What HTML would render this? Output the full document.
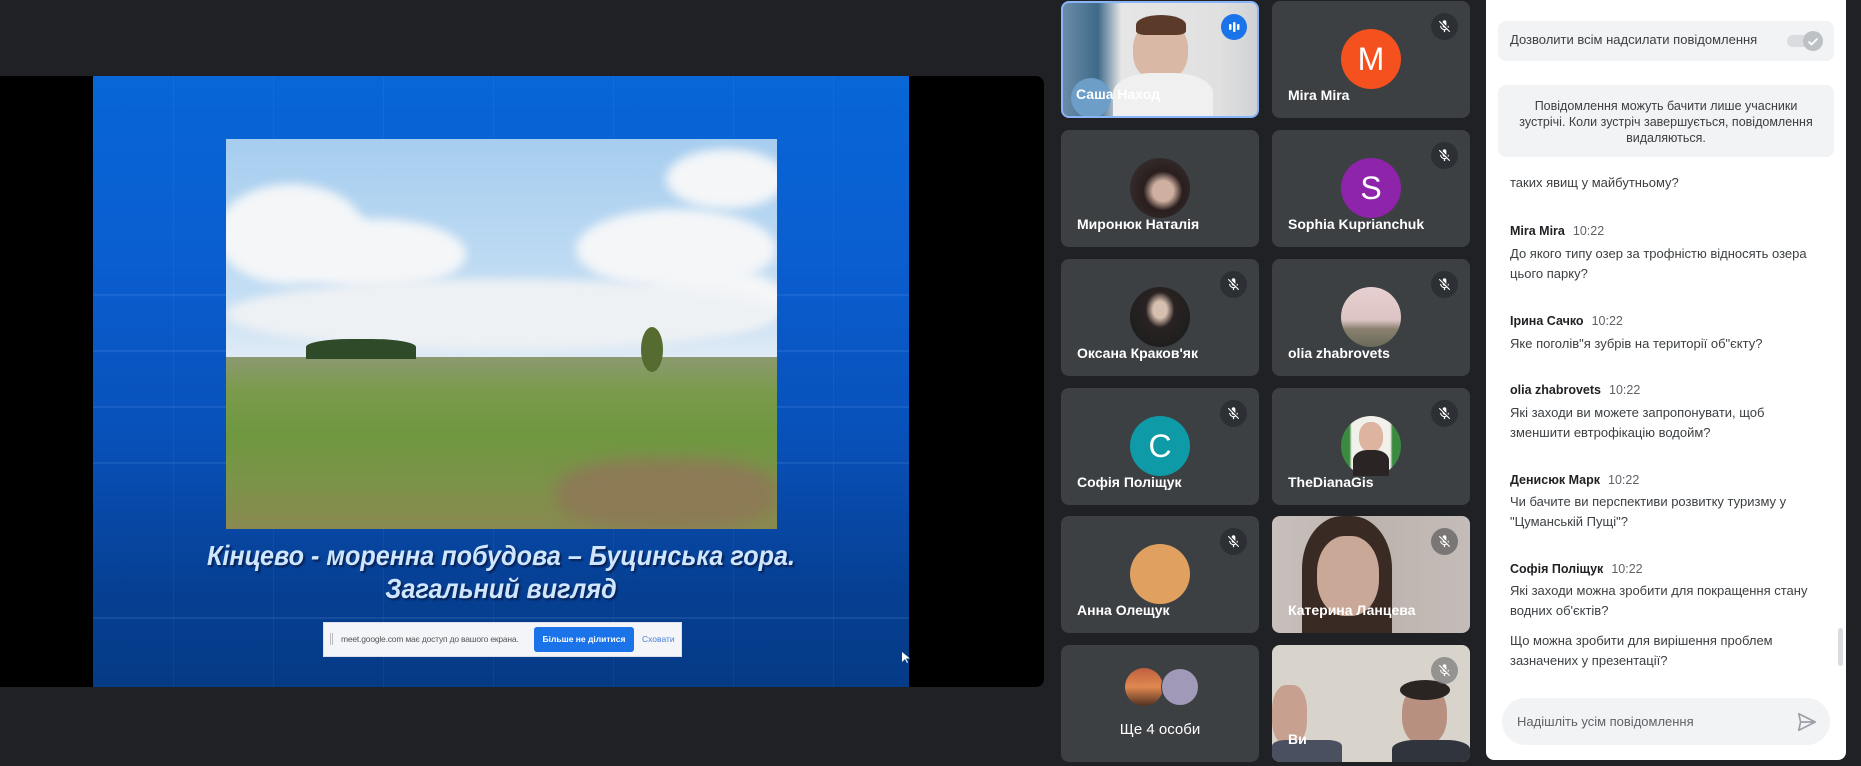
<!DOCTYPE html>
<html><head><meta charset="utf-8"><style>
*{margin:0;padding:0;box-sizing:border-box}
body{width:1861px;height:766px;background:#202124;position:relative;overflow:hidden;font-family:"Liberation Sans",Arial,sans-serif}
.abs{position:absolute}
.stage{left:0;top:76px;width:1044px;height:611px;background:#000;border-radius:0 8px 8px 0}
.slide{left:93px;top:76px;width:816px;height:611px;background:linear-gradient(#0866d6 0%,#0a5ed0 30%,#0850b8 60%,#063f92 85%,#053a85 100%);overflow:hidden}
.hl{position:absolute;left:0;width:100%;height:2px;background:rgba(120,170,255,.14)}
.vl{position:absolute;top:0;height:100%;width:1px;background:rgba(140,180,255,.08)}
.photo{left:226px;top:139px;width:551px;height:390px;overflow:hidden;background:linear-gradient(#a6cdef 0%,#c4def4 40%,#e6eef6 60%,#dfe8ee 66%)}
.cl{position:absolute;background:#f4f6f8;border-radius:50%;filter:blur(5px)}
.ground{position:absolute;left:0;top:218px;width:100%;height:172px;background:linear-gradient(#8c9a70 0%,#7a9a4c 20%,#6f9840 45%,#7a9448 70%,#8a8a50 100%)}
.title{left:93px;width:816px;text-align:center;color:#cfe6ff;font-style:italic;font-weight:bold;font-size:28px;text-shadow:2px 2px 2px #0a2050;transform:scaleX(.9)}
.bar{left:323px;top:622px;width:359px;height:35px;background:#f3f5f8;border:1px solid #dde}
.tile{position:absolute;width:198px;height:117px;background:#3c4043;border-radius:8px;overflow:hidden}
.nm{position:absolute;left:16px;bottom:15px;color:#fff;font-size:14px;font-weight:bold;white-space:nowrap}
.av{position:absolute;left:69px;top:28px;width:60px;height:60px;border-radius:50%;color:#fff;font-size:32px;text-align:center;line-height:60px}
.mute{position:absolute;right:12px;top:12px;width:27px;height:27px;border-radius:50%;background:#2c2f33}
.mute svg{position:absolute;left:6px;top:6px}
.chat{left:1486px;top:0;width:360px;height:760px;background:#fff;border-radius:0 0 8px 8px}
.msg{position:absolute;left:1510px;font-size:13px;color:#3c4043;line-height:20px}
.nme{position:absolute;left:1510px;font-size:12.5px;color:#202124;font-weight:bold}
.nme span{font-weight:normal;color:#5f6368;margin-left:8px}
</style></head><body>
<div class="abs stage"></div>
<div class="abs slide">
 <div class="hl" style="top:218px"></div><div class="hl" style="top:274px"></div><div class="hl" style="top:330px"></div><div class="hl" style="top:386px"></div><div class="hl" style="top:541px"></div>
 <div class="vl" style="left:80px"></div><div class="vl" style="left:180px"></div><div class="vl" style="left:290px"></div><div class="vl" style="left:400px"></div><div class="vl" style="left:520px"></div><div class="vl" style="left:640px"></div><div class="vl" style="left:740px"></div>
</div>
<div class="abs photo">
 <div class="cl" style="left:-10px;top:45px;width:150px;height:100px"></div>
 <div class="cl" style="left:60px;top:80px;width:180px;height:70px"></div>
 <div class="cl" style="left:440px;top:10px;width:120px;height:60px"></div>
 <div class="cl" style="left:350px;top:70px;width:200px;height:80px"></div>
 <div class="cl" style="left:420px;top:130px;width:140px;height:60px"></div>
 <div class="cl" style="left:0px;top:140px;width:551px;height:70px;background:#eef1f4"></div>
 <div class="ground"></div>
 <div style="position:absolute;left:80px;top:200px;width:110px;height:20px;background:#2f4a28;border-radius:40% 40% 0 0"></div>
 <div style="position:absolute;left:415px;top:188px;width:22px;height:45px;background:#556b30;border-radius:50%"></div>
 <div style="position:absolute;left:330px;top:320px;width:221px;height:70px;background:#8c7a55;filter:blur(8px);border-radius:40%"></div>
</div>
<div class="abs title" style="top:540px">Кінцево - моренна побудова – Буцинська гора.</div>
<div class="abs title" style="top:573px">Загальний вигляд</div>
<div class="abs bar">
 <span style="position:absolute;left:6px;top:10px;width:3px;height:12px;border-left:1px solid #bbb;border-right:1px solid #bbb"></span>
 <span style="position:absolute;left:17px;top:11px;font-size:8.5px;color:#555;white-space:nowrap;letter-spacing:-.2px">meet.google.com має доступ до вашого екрана.</span>
 <span style="position:absolute;left:210px;top:4px;width:100px;height:25px;background:#1a73e8;border-radius:3px;color:#fff;font-size:8.5px;font-weight:bold;text-align:center;line-height:25px">Більше не ділитися</span>
 <span style="position:absolute;left:318px;top:11px;font-size:8.5px;color:#4a7fd8">Сховати</span>
</div>
<svg class="abs" style="left:902px;top:652px" width="8" height="12"><path d="M0 0V10L3 7L5 11L6 10.5L4 6.5H8Z" fill="#fff"/></svg>

<!-- tiles -->
<div class="tile" style="left:1061px;top:1px;border:2px solid #8ab4f8;background:linear-gradient(90deg,#6a8ca8 0%,#3f6a8a 18%,#e6e6e6 30%,#e0e0e0 80%,#cfd3d6 100%)">
 <div style="position:absolute;left:70px;top:18px;width:55px;height:60px;border-radius:45%;background:#d9b8a6"></div>
 <div style="position:absolute;left:73px;top:12px;width:50px;height:20px;border-radius:50% 50% 20% 20%;background:#5b3a2a"></div>
 <div style="position:absolute;left:50px;top:70px;width:100px;height:50px;border-radius:40% 40% 0 0;background:#f0f0f0"></div>
 <div style="position:absolute;left:8px;top:75px;width:40px;height:40px;border-radius:50%;background:#6c9ec8"></div>
 <div style="position:absolute;right:10px;top:11px;width:26px;height:26px;border-radius:50%;background:#1a73e8"><svg width="26" height="26"><rect x="8" y="10" width="2.5" height="6" rx="1" fill="#fff"/><rect x="12" y="8" width="2.5" height="10" rx="1" fill="#fff"/><rect x="16" y="10" width="2.5" height="6" rx="1" fill="#fff"/></svg></div>
 <div class="nm" style="left:13px;bottom:14px">Саша Наход</div>
</div>
<div class="tile" style="left:1272px;top:1px"><div class="av" style="background:#f4511e">M</div><div class="mute"><svg width="15" height="15" viewBox="0 0 24 24"><path d="M19 11h-1.7c0 .74-.16 1.43-.43 2.050l1.23 1.230c.56-.98.9-2.090.9-3.280zm-4.020.17c0-.06.020-.11.020-.17V5c0-1.660-1.340-3-3-3S9 3.340 9 5v.18l5.980 5.990zM4.270 3L3 4.270l6.010 6.010V11c0 1.660 1.330 3 2.990 3 .22 0 .44-.03.65-.08l1.660 1.660c-.71.33-1.500.52-2.310.52-2.760 0-5.300-2.100-5.300-5.100H5c0 3.410 2.720 6.230 6 6.720V21h2v-3.280c.91-.13 1.770-.45 2.540-.9L19.730 21 21 19.730 4.270 3z" fill="#fff"/></svg></div><div class="nm">Mira Mira</div></div>
<div class="tile" style="left:1061px;top:130px"><div class="av" style="background:radial-gradient(ellipse at 55% 55%,#cfb0a0 22%,#2a1e1e 42%,#3a3636 100%)"></div><div class="nm">Миронюк Наталія</div></div>
<div class="tile" style="left:1272px;top:130px"><div class="av" style="background:#8e24aa">S</div><div class="mute"><svg width="15" height="15" viewBox="0 0 24 24"><path d="M19 11h-1.7c0 .74-.16 1.43-.43 2.05l1.23 1.23c.56-.98.9-2.09.9-3.28zm-4.02.17c0-.06.02-.11.02-.17V5c0-1.66-1.34-3-3-3S9 3.34 9 5v.18l5.98 5.99zM4.27 3L3 4.27l6.01 6.01V11c0 1.66 1.33 3 2.99 3 .22 0 .44-.03.65-.08l1.66 1.66c-.71.33-1.5.52-2.31.52-2.76 0-5.3-2.1-5.3-5.1H5c0 3.41 2.72 6.23 6 6.72V21h2v-3.28c.91-.13 1.77-.45 2.54-.9L19.73 21 21 19.73 4.27 3z" fill="#fff"/></svg></div><div class="nm">Sophia Kuprianchuk</div></div>
<div class="tile" style="left:1061px;top:259px"><div class="av" style="background:radial-gradient(ellipse at 50% 38%,#d8c0b0 16%,#2a2222 34%,#1e1e1e 75%,#ccc 100%)"></div><div class="mute"><svg width="15" height="15" viewBox="0 0 24 24"><path d="M19 11h-1.7c0 .74-.16 1.43-.43 2.05l1.23 1.23c.56-.98.9-2.09.9-3.28zm-4.02.17c0-.06.02-.11.02-.17V5c0-1.66-1.34-3-3-3S9 3.34 9 5v.18l5.98 5.99zM4.27 3L3 4.27l6.01 6.01V11c0 1.66 1.33 3 2.99 3 .22 0 .44-.03.65-.08l1.66 1.66c-.71.33-1.5.52-2.31.52-2.76 0-5.3-2.1-5.3-5.1H5c0 3.41 2.72 6.23 6 6.72V21h2v-3.28c.91-.13 1.77-.45 2.54-.9L19.73 21 21 19.73 4.27 3z" fill="#fff"/></svg></div><div class="nm">Оксана Краков'як</div></div>
<div class="tile" style="left:1272px;top:259px"><div class="av" style="background:linear-gradient(#e8d0d0 0%,#dcc4c4 55%,#8a8070 70%,#6a6a58 100%)"></div><div class="mute"><svg width="15" height="15" viewBox="0 0 24 24"><path d="M19 11h-1.7c0 .74-.16 1.43-.43 2.05l1.23 1.23c.56-.98.9-2.09.9-3.28zm-4.02.17c0-.06.02-.11.02-.17V5c0-1.66-1.34-3-3-3S9 3.34 9 5v.18l5.98 5.99zM4.27 3L3 4.27l6.01 6.01V11c0 1.66 1.33 3 2.99 3 .22 0 .44-.03.65-.08l1.66 1.66c-.71.33-1.5.52-2.31.52-2.76 0-5.3-2.1-5.3-5.1H5c0 3.41 2.72 6.23 6 6.72V21h2v-3.28c.91-.13 1.77-.45 2.54-.9L19.73 21 21 19.73 4.27 3z" fill="#fff"/></svg></div><div class="nm">olia zhabrovets</div></div>
<div class="tile" style="left:1061px;top:388px"><div class="av" style="background:#0e9aa7">C</div><div class="mute"><svg width="15" height="15" viewBox="0 0 24 24"><path d="M19 11h-1.7c0 .74-.16 1.43-.43 2.05l1.23 1.23c.56-.98.9-2.09.9-3.28zm-4.02.17c0-.06.02-.11.02-.17V5c0-1.66-1.34-3-3-3S9 3.34 9 5v.18l5.98 5.99zM4.27 3L3 4.27l6.01 6.01V11c0 1.66 1.33 3 2.99 3 .22 0 .44-.03.65-.08l1.66 1.66c-.71.33-1.5.52-2.31.52-2.76 0-5.3-2.1-5.3-5.1H5c0 3.41 2.72 6.23 6 6.72V21h2v-3.28c.91-.13 1.77-.45 2.54-.9L19.73 21 21 19.73 4.27 3z" fill="#fff"/></svg></div><div class="nm">Софія Поліщук</div></div>
<div class="tile" style="left:1272px;top:388px"><div class="av" style="background:linear-gradient(90deg,#3a8a40 0%,#3a8a40 14%,#f2f0ea 18%,#f2f0ea 82%,#3a8a40 86%)"><div style="position:absolute;left:18px;top:6px;width:24px;height:30px;border-radius:45%;background:#dcb4a0"></div><div style="position:absolute;left:12px;top:34px;width:36px;height:26px;background:#2a2424;border-radius:40% 40% 0 0"></div></div><div class="mute"><svg width="15" height="15" viewBox="0 0 24 24"><path d="M19 11h-1.7c0 .74-.16 1.43-.43 2.05l1.23 1.23c.56-.98.9-2.09.9-3.28zm-4.02.17c0-.06.02-.11.02-.17V5c0-1.66-1.34-3-3-3S9 3.34 9 5v.18l5.98 5.99zM4.27 3L3 4.27l6.01 6.01V11c0 1.66 1.33 3 2.99 3 .22 0 .44-.03.65-.08l1.66 1.66c-.71.33-1.5.52-2.31.52-2.76 0-5.3-2.1-5.3-5.1H5c0 3.41 2.72 6.23 6 6.72V21h2v-3.28c.91-.13 1.77-.45 2.54-.9L19.73 21 21 19.73 4.27 3z" fill="#fff"/></svg></div><div class="nm">TheDianaGis</div></div>
<div class="tile" style="left:1061px;top:516px"><div class="av" style="background:#e0a060"></div><div class="mute"><svg width="15" height="15" viewBox="0 0 24 24"><path d="M19 11h-1.7c0 .74-.16 1.43-.43 2.05l1.23 1.23c.56-.98.9-2.09.9-3.28zm-4.02.17c0-.06.02-.11.02-.17V5c0-1.66-1.34-3-3-3S9 3.34 9 5v.18l5.98 5.99zM4.27 3L3 4.27l6.01 6.01V11c0 1.66 1.33 3 2.99 3 .22 0 .44-.03.65-.08l1.66 1.66c-.71.33-1.5.52-2.31.52-2.76 0-5.3-2.1-5.3-5.1H5c0 3.41 2.72 6.23 6 6.72V21h2v-3.28c.91-.13 1.77-.45 2.54-.9L19.73 21 21 19.73 4.27 3z" fill="#fff"/></svg></div><div class="nm">Анна Олещук</div></div>
<div class="tile" style="left:1272px;top:516px;background:linear-gradient(90deg,#c8c0bc,#bdb3ae 50%,#c4bcb8)">
 <div style="position:absolute;left:30px;top:0;width:90px;height:117px;border-radius:45% 45% 0 0;background:#3a2a24"></div>
 <div style="position:absolute;left:45px;top:20px;width:62px;height:80px;border-radius:45%;background:#c9a898"></div>
 <div class="mute" style="background:rgba(90,90,90,.7)"><svg width="15" height="15" viewBox="0 0 24 24"><path d="M19 11h-1.7c0 .74-.16 1.43-.43 2.05l1.23 1.23c.56-.98.9-2.09.9-3.28zm-4.02.17c0-.06.02-.11.02-.17V5c0-1.66-1.34-3-3-3S9 3.34 9 5v.18l5.98 5.99zM4.27 3L3 4.27l6.01 6.01V11c0 1.66 1.33 3 2.99 3 .22 0 .44-.03.65-.08l1.66 1.66c-.71.33-1.5.52-2.31.52-2.76 0-5.3-2.1-5.3-5.1H5c0 3.41 2.72 6.23 6 6.72V21h2v-3.28c.91-.13 1.77-.45 2.54-.9L19.73 21 21 19.73 4.27 3z" fill="#fff"/></svg></div><div class="nm">Катерина Ланцева</div></div>
<div class="tile" style="left:1061px;top:645px"><div style="position:absolute;left:64px;top:23px;width:38px;height:38px;border-radius:50%;background:linear-gradient(#c06040,#e08850 50%,#503020)"></div><div style="position:absolute;left:100px;top:23px;width:38px;height:38px;border-radius:50%;background:#a09ab8;border:1px solid #3c4043"></div><div class="nm" style="left:0;width:198px;text-align:center;bottom:24px;font-weight:normal;font-size:15px">Ще 4 особи</div></div>
<div class="tile" style="left:1272px;top:645px;background:#d8d4cc">
 <div style="position:absolute;left:0;top:40px;width:35px;height:60px;border-radius:40%;background:#c8a090"></div>
 <div style="position:absolute;left:0;top:95px;width:70px;height:30px;background:#4a5060;border-radius:20% 20% 0 0"></div>
 <div style="position:absolute;left:130px;top:40px;width:45px;height:60px;border-radius:45%;background:#b89080"></div>
 <div style="position:absolute;left:128px;top:35px;width:50px;height:20px;border-radius:50%;background:#2a2422"></div>
 <div style="position:absolute;left:120px;top:95px;width:78px;height:30px;background:#30343c;border-radius:30% 30% 0 0"></div>
 <div class="mute" style="background:rgba(120,120,120,.7)"><svg width="15" height="15" viewBox="0 0 24 24"><path d="M19 11h-1.7c0 .74-.16 1.43-.43 2.05l1.23 1.23c.56-.98.9-2.09.9-3.28zm-4.02.17c0-.06.02-.11.02-.17V5c0-1.66-1.34-3-3-3S9 3.34 9 5v.18l5.98 5.99zM4.27 3L3 4.27l6.01 6.01V11c0 1.66 1.33 3 2.99 3 .22 0 .44-.03.65-.08l1.66 1.66c-.71.33-1.5.52-2.31.52-2.76 0-5.3-2.1-5.3-5.1H5c0 3.41 2.72 6.23 6 6.72V21h2v-3.28c.91-.13 1.77-.45 2.54-.9L19.73 21 21 19.73 4.27 3z" fill="#fff"/></svg></div><div class="nm">Ви</div></div>

<!-- chat -->
<div class="abs chat"></div>
<div class="abs" style="left:1498px;top:21px;width:336px;height:40px;background:#f1f3f4;border-radius:8px"></div>
<div class="abs" style="left:1510px;top:32px;font-size:13px;color:#3c4043">Дозволити всім надсилати повідомлення</div>
<div class="abs" style="left:1787px;top:35px;width:32px;height:12px;border-radius:6px;background:#dadce0"></div>
<div class="abs" style="left:1803px;top:31px;width:20px;height:20px;border-radius:50%;background:#bdc1c6"><svg width="20" height="20"><path d="M5.5 10.5l3 3 6-6" stroke="#fff" stroke-width="1.8" fill="none"/></svg></div>
<div class="abs" style="left:1498px;top:85px;width:336px;height:72px;background:#f1f3f4;border-radius:8px;text-align:center;font-size:12.5px;color:#3c4043;line-height:16px;padding:13px 18px 0">Повідомлення можуть бачити лише учасники зустрічі. Коли зустріч завершується, повідомлення видаляються.</div>
<div class="msg" style="top:173px">таких явищ у майбутньому?</div>
<div class="nme" style="top:224px">Mira Mira<span>10:22</span></div>
<div class="msg" style="top:244px">До якого типу озер за трофністю відносять озера<br>цього парку?</div>
<div class="nme" style="top:314px">Ірина Сачко<span>10:22</span></div>
<div class="msg" style="top:334px">Яке поголів"я зубрів на території об"єкту?</div>
<div class="nme" style="top:383px">olia zhabrovets<span>10:22</span></div>
<div class="msg" style="top:403px">Які заходи ви можете запропонувати, щоб<br>зменшити евтрофікацію водойм?</div>
<div class="nme" style="top:473px">Денисюк Марк<span>10:22</span></div>
<div class="msg" style="top:492px">Чи бачите ви перспективи розвитку туризму у<br>"Цуманській Пущі"?</div>
<div class="nme" style="top:562px">Софія Поліщук<span>10:22</span></div>
<div class="msg" style="top:581px">Які заходи можна зробити для покращення стану<br>водних об'єктів?</div>
<div class="msg" style="top:631px">Що можна зробити для вирішення проблем<br>зазначених у презентації?</div>
<div class="abs" style="left:1838px;top:628px;width:5px;height:38px;background:#dadce0;border-radius:3px"></div>
<div class="abs" style="left:1502px;top:698px;width:328px;height:47px;background:#f1f3f4;border-radius:24px"></div>
<div class="abs" style="left:1517px;top:714px;font-size:13px;color:#5f6368">Надішліть усім повідомлення</div>
<svg class="abs" style="left:1796px;top:711px" width="22" height="22" viewBox="0 0 24 24"><path d="M3 3l18 9-18 9 2-9zM5 12h14" stroke="#9aa0a6" stroke-width="1.8" fill="none" stroke-linejoin="round"/></svg>
</body></html>
